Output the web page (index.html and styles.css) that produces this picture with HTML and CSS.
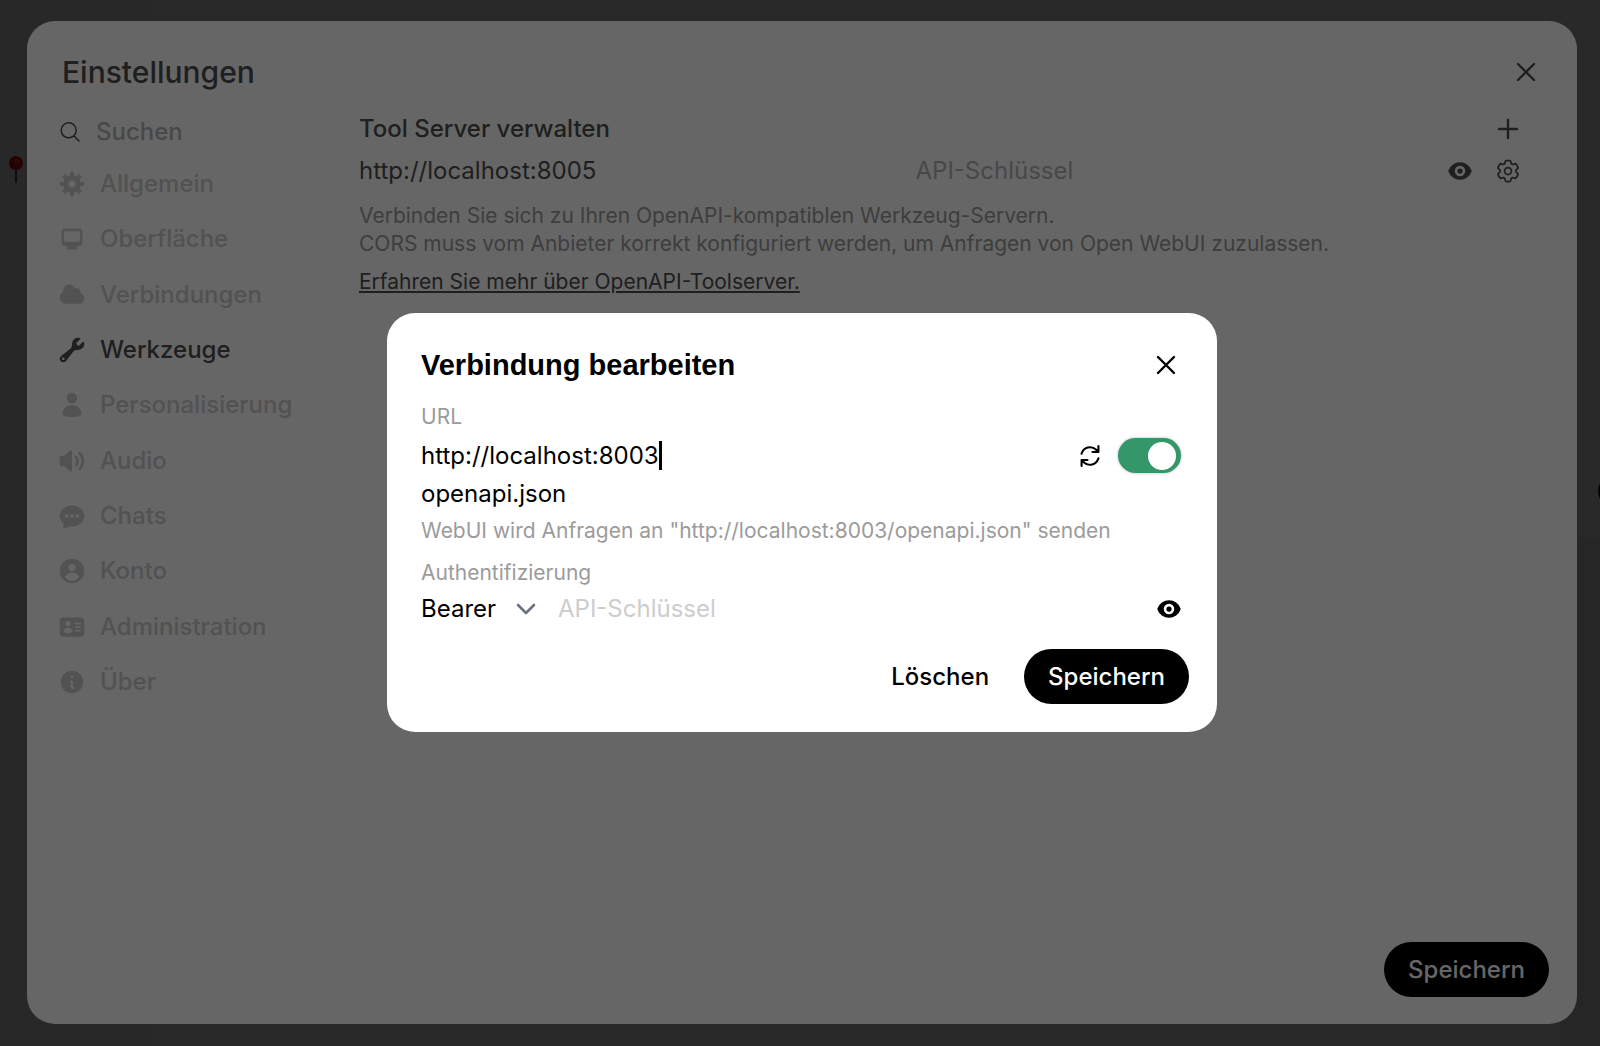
FILE: index.html
```html
<!DOCTYPE html>
<html lang="de">
<head>
  <meta charset="UTF-8">
  <meta name="viewport" content="width=device-width, initial-scale=1.0">
  <title>Einstellungen</title>
  <link rel="stylesheet" href="styles.css">
</head>
<body>
  <!-- Page behind the dialogs -->
  <div class="app">
    <div class="app-sidebar"></div>
    <div class="app-composer"></div>
    <div class="app-avatar"></div>
    <svg class="pin" viewBox="0 0 16 28" aria-hidden="true">
      <path d="M7 12h2v15H7z" fill="#555"/>
      <circle cx="8" cy="7" r="7" fill="#e01010"/>
      <ellipse cx="9" cy="5" rx="3" ry="2" fill="#f04a4a"/>
    </svg>
  </div>

  <!-- Settings -->
  <div class="overlay">
    <section class="settings" aria-label="Einstellungen">
      <header class="settings-header">
        <h1>Einstellungen</h1>
        <button type="button" class="icon-button" aria-label="Schließen">
          <svg class="icon stroke" viewBox="0 0 28 28"><path d="M6 6l16 16M22 6L6 22"/></svg>
        </button>
      </header>

      <div class="settings-body">
        <aside class="sidebar">
          <label class="search">
            <svg class="search-icon" viewBox="0 0 24 24"><path d="m21 21-5.2-5.2m0 0A7.5 7.5 0 1 0 5.2 5.2a7.5 7.5 0 0 0 10.6 10.6Z"/></svg>
            <input type="text" placeholder="Suchen" aria-label="Suchen">
          </label>

          <nav class="tabs">
            <button type="button" class="tab">
              <svg class="icon" viewBox="0 0 16 16"><path fill-rule="evenodd" d="M6.955 1.45A.5.5 0 0 1 7.452 1h1.096a.5.5 0 0 1 .497.45l.17 1.699c.484.12.94.312 1.356.562l1.321-1.081a.5.5 0 0 1 .67.033l.774.775a.5.5 0 0 1 .034.67l-1.08 1.32c.25.417.44.873.561 1.357l1.699.17a.5.5 0 0 1 .45.497v1.096a.5.5 0 0 1-.45.497l-1.699.17c-.12.484-.312.94-.562 1.356l1.082 1.322a.5.5 0 0 1-.034.67l-.774.774a.5.5 0 0 1-.67.033l-1.322-1.08c-.416.25-.872.44-1.356.561l-.17 1.699a.5.5 0 0 1-.497.45H7.452a.5.5 0 0 1-.497-.45l-.17-1.699a4.973 4.973 0 0 1-1.356-.562L4.108 13.37a.5.5 0 0 1-.67-.033l-.774-.775a.5.5 0 0 1-.034-.67l1.08-1.32a4.971 4.971 0 0 1-.561-1.357l-1.699-.17A.5.5 0 0 1 1 8.548V7.452a.5.5 0 0 1 .45-.497l1.699-.17c.12-.484.312-.94.562-1.356L2.629 4.107a.5.5 0 0 1 .034-.67l.774-.774a.5.5 0 0 1 .67-.033L5.43 3.71a4.97 4.97 0 0 1 1.356-.561l.17-1.699ZM6 8a2 2 0 1 0 4 0 2 2 0 0 0-4 0Z"/></svg>
              Allgemein
            </button>
            <button type="button" class="tab">
              <svg class="icon" viewBox="0 0 16 16"><path fill-rule="evenodd" d="M2 4.25A2.25 2.25 0 0 1 4.25 2h7.5A2.25 2.25 0 0 1 14 4.25v5.5A2.25 2.25 0 0 1 11.75 12h-1.312c.1.128.21.248.328.36a.75.75 0 0 1 .234.545v.345a.75.75 0 0 1-.75.75h-4.5a.75.75 0 0 1-.75-.75v-.345a.75.75 0 0 1 .234-.545c.118-.111.228-.232.328-.36H4.25A2.25 2.25 0 0 1 2 9.75v-5.5Zm2.25-.75a.75.75 0 0 0-.75.75v4.5c0 .414.336.75.75.75h7.5a.75.75 0 0 0 .75-.75v-4.5a.75.75 0 0 0-.75-.75h-7.5Z"/></svg>
              Oberfläche
            </button>
            <button type="button" class="tab">
              <svg class="icon" viewBox="0 0 16 16"><path d="M1 9.5A3.5 3.5 0 0 0 4.5 13H12a3 3 0 0 0 .917-5.857 2.503 2.503 0 0 0-3.198-3.019 3.5 3.5 0 0 0-6.628 2.171A3.5 3.5 0 0 0 1 9.5Z"/></svg>
              Verbindungen
            </button>
            <button type="button" class="tab active">
              <svg class="icon" viewBox="0 0 16 16"><path fill-rule="evenodd" d="M11.5 8a3.5 3.5 0 0 0 3.362-4.476c-.094-.325-.497-.39-.736-.15L12.099 5.4a.48.48 0 0 1-.653.033 8.554 8.554 0 0 1-.879-.879.48.48 0 0 1 .033-.653l2.027-2.028c.24-.239.175-.642-.15-.736a3.502 3.502 0 0 0-4.476 3.427c.018.99-.133 2.093-.914 2.7l-5.31 4.13a2.015 2.015 0 1 0 2.828 2.827l4.13-5.309c.607-.78 1.71-.932 2.7-.914L11.5 8ZM3 13.75a.75.75 0 1 0 0-1.5.75.75 0 0 0 0 1.5Z"/></svg>
              Werkzeuge
            </button>
            <button type="button" class="tab">
              <svg class="icon" viewBox="0 0 24 24"><path d="M7.5 6a4.5 4.5 0 1 1 9 0 4.5 4.5 0 0 1-9 0ZM3.751 20.105a8.25 8.25 0 0 1 16.498 0 .75.75 0 0 1-.437.695A18.683 18.683 0 0 1 12 22.5c-2.786 0-5.433-.608-7.812-1.7a.75.75 0 0 1-.437-.695Z"/></svg>
              Personalisierung
            </button>
            <button type="button" class="tab">
              <svg class="icon" viewBox="0 0 16 16"><path d="M7.557 2.066A.75.75 0 0 1 8 2.75v10.5a.75.75 0 0 1-1.248.56L3.59 11H2a1 1 0 0 1-1-1V6a1 1 0 0 1 1-1h1.59l3.162-2.81a.75.75 0 0 1 .805-.124ZM12.95 3.05a.75.75 0 1 0-1.06 1.06 5.5 5.5 0 0 1 0 7.78.75.75 0 1 0 1.06 1.06 7 7 0 0 0 0-9.9Z"/><path d="M10.828 5.172a.75.75 0 1 0-1.06 1.06 2.5 2.5 0 0 1 0 3.536.75.75 0 1 0 1.06 1.06 4 4 0 0 0 0-5.656Z"/></svg>
              Audio
            </button>
            <button type="button" class="tab">
              <svg class="icon" viewBox="0 0 16 16"><path fill-rule="evenodd" d="M8 2C4.262 2 1 4.57 1 8c0 1.86.98 3.486 2.455 4.566a3.472 3.472 0 0 1-.469 1.26.75.75 0 0 0 .713 1.14 6.961 6.961 0 0 0 3.06-1.06c.403.062.818.094 1.241.094 3.738 0 7-2.57 7-6s-3.262-6-7-6ZM5 9a1 1 0 1 0 0-2 1 1 0 0 0 0 2Zm7-1a1 1 0 1 1-2 0 1 1 0 0 1 2 0ZM8 9a1 1 0 1 0 0-2 1 1 0 0 0 0 2Z"/></svg>
              Chats
            </button>
            <button type="button" class="tab">
              <svg class="icon" viewBox="0 0 16 16"><path fill-rule="evenodd" d="M15 8A7 7 0 1 1 1 8a7 7 0 0 1 14 0Zm-5-2a2 2 0 1 1-4 0 2 2 0 0 1 4 0ZM8 9c-1.825 0-3.422.977-4.295 2.437A5.49 5.49 0 0 0 8 13.5a5.49 5.49 0 0 0 4.294-2.063A4.997 4.997 0 0 0 8 9Z"/></svg>
              Konto
            </button>
            <button type="button" class="tab">
              <svg class="icon" viewBox="0 0 24 24"><path fill-rule="evenodd" d="M4.5 3.75a3 3 0 0 0-3 3v10.5a3 3 0 0 0 3 3h15a3 3 0 0 0 3-3V6.75a3 3 0 0 0-3-3h-15Zm4.125 3a2.25 2.25 0 1 0 0 4.5 2.25 2.25 0 0 0 0-4.5Zm-3.873 8.703a4.126 4.126 0 0 1 7.746 0 .75.75 0 0 1-.351.92 7.47 7.47 0 0 1-3.522.877 7.47 7.47 0 0 1-3.522-.877.75.75 0 0 1-.351-.92ZM15 8.25a.75.75 0 0 0 0 1.5h3.75a.75.75 0 0 0 0-1.5H15ZM14.25 12a.75.75 0 0 1 .75-.75h3.75a.75.75 0 0 1 0 1.5H15a.75.75 0 0 1-.75-.75Zm.75 2.25a.75.75 0 0 0 0 1.5h3.75a.75.75 0 0 0 0-1.5H15Z"/></svg>
              Administration
            </button>
            <button type="button" class="tab">
              <svg class="icon" viewBox="0 0 20 20"><path fill-rule="evenodd" d="M18 10a8 8 0 1 1-16 0 8 8 0 0 1 16 0zm-7-4a1 1 0 1 1-2 0 1 1 0 0 1 2 0zM9 9a.75.75 0 0 0 0 1.5h.253a.25.25 0 0 1 .244.304l-.459 2.066A1.75 1.75 0 0 0 10.747 15H11a.75.75 0 0 0 0-1.5h-.253a.25.25 0 0 1-.244-.304l.459-2.066A1.75 1.75 0 0 0 9.253 9H9z"/></svg>
              Über
            </button>
          </nav>
        </aside>

        <form class="tools">
          <div class="row">
            <h2>Tool Server verwalten</h2>
            <button type="button" class="icon-button" aria-label="Verbindung hinzufügen">
              <svg class="icon stroke" viewBox="0 0 28 28"><path d="M14 5v18M5 14h18"/></svg>
            </button>
          </div>

          <div class="row server">
            <input type="text" class="server-url" value="http://localhost:8005" aria-label="URL">
            <input type="password" class="server-key" placeholder="API-Schlüssel" aria-label="API-Schlüssel">
            <button type="button" class="icon-button" aria-label="Schlüssel anzeigen">
              <svg class="icon" viewBox="0 0 16 16"><path d="M8 9.5a1.5 1.5 0 1 0 0-3 1.5 1.5 0 0 0 0 3Z"/><path fill-rule="evenodd" d="M1.38 8.28a.87.87 0 0 1 0-.566 7.003 7.003 0 0 1 13.238.006.87.87 0 0 1 0 .566A7.003 7.003 0 0 1 1.379 8.28ZM11 8a3 3 0 1 1-6 0 3 3 0 0 1 6 0Z"/></svg>
            </button>
            <button type="button" class="icon-button" aria-label="Konfigurieren">
              <svg class="icon outline" viewBox="0 0 24 24"><path d="M9.594 3.94c.09-.542.56-.94 1.11-.94h2.593c.55 0 1.02.398 1.11.94l.213 1.281c.063.374.313.686.645.87.074.04.147.083.22.127.325.196.72.257 1.075.124l1.217-.456a1.125 1.125 0 0 1 1.37.49l1.296 2.247a1.125 1.125 0 0 1-.26 1.431l-1.003.827c-.293.241-.438.613-.43.992a7.723 7.723 0 0 1 0 .255c-.008.378.137.75.43.991l1.004.827c.424.35.534.955.26 1.43l-1.298 2.247a1.125 1.125 0 0 1-1.369.491l-1.217-.456c-.355-.133-.75-.072-1.076.124a6.47 6.47 0 0 1-.22.128c-.331.183-.581.495-.644.869l-.213 1.281c-.09.543-.56.94-1.11.94h-2.594c-.55 0-1.019-.398-1.11-.94l-.213-1.281c-.062-.374-.312-.686-.644-.87a6.52 6.52 0 0 1-.22-.127c-.325-.196-.72-.257-1.076-.124l-1.217.456a1.125 1.125 0 0 1-1.369-.49l-1.297-2.247a1.125 1.125 0 0 1 .26-1.431l1.004-.827c.292-.24.437-.613.43-.991a6.932 6.932 0 0 1 0-.255c.007-.38-.138-.751-.43-.992l-1.004-.827a1.125 1.125 0 0 1-.26-1.43l1.297-2.247a1.125 1.125 0 0 1 1.37-.491l1.216.456c.356.133.751.072 1.076-.124.072-.044.146-.086.22-.128.332-.183.582-.495.644-.869l.214-1.28Z"/><circle cx="12" cy="12" r="3"/></svg>
            </button>
          </div>

          <p class="description">
            Verbinden Sie sich zu Ihren OpenAPI-kompatiblen Werkzeug-Servern.<br>
            CORS muss vom Anbieter korrekt konfiguriert werden, um Anfragen von Open WebUI zuzulassen.
          </p>
          <a class="more" href="#">Erfahren Sie mehr über OpenAPI-Toolserver.</a>

          <div class="settings-footer">
            <button type="submit" class="primary">Speichern</button>
          </div>
        </form>
      </div>
    </section>
  </div>

  <!-- Edit connection -->
  <div class="overlay centered">
    <form class="dialog" role="dialog" aria-labelledby="dialogTitle">
      <header class="dialog-header">
        <h2 id="dialogTitle">Verbindung bearbeiten</h2>
        <button type="button" class="icon-button" aria-label="Schließen">
          <svg class="icon stroke" viewBox="0 0 28 28"><path d="M6 6l16 16M22 6L6 22"/></svg>
        </button>
      </header>

      <div class="dialog-fields">
        <label class="caption" for="url">URL</label>
        <div class="url-row">
          <input type="text" id="url" value="http://localhost:8003">
          <span class="caret"></span>
          <button type="button" class="icon-button refresh" aria-label="Verbindung prüfen">
            <svg class="icon" viewBox="0 0 20 20"><path d="M15.312 11.424a5.5 5.5 0 0 1-9.201 2.466l-.312-.311h2.433a.75.75 0 0 0 0-1.5H3.989a.75.75 0 0 0-.75.75v4.242a.75.75 0 0 0 1.5 0v-2.43l.31.31a7 7 0 0 0 11.712-3.138.75.75 0 0 0-1.449-.39zm1.23-3.723a.75.75 0 0 0 .219-.53V2.929a.75.75 0 0 0-1.5 0V5.36l-.31-.31A7 7 0 0 0 3.239 8.188a.75.75 0 1 0 1.448.389A5.5 5.5 0 0 1 13.89 6.11l.311.31h-2.432a.75.75 0 0 0 0 1.5h4.243a.75.75 0 0 0 .53-.219z"/></svg>
          </button>
          <input type="checkbox" class="switch" aria-label="Aktiviert" checked>
        </div>
        <input type="text" class="path" value="openapi.json" aria-label="OpenAPI-Pfad">
        <p class="hint">WebUI wird Anfragen an "http://localhost:8003/openapi.json" senden</p>

        <label class="caption auth-caption" for="auth">Authentifizierung</label>
        <div class="auth-row">
          <div class="select">
            <select id="auth">
              <option>Bearer</option>
            </select>
            <svg class="chevron" viewBox="0 0 20 12"><path d="M2 2l8 8 8-8"/></svg>
          </div>
          <input type="password" class="auth-key" placeholder="API-Schlüssel" aria-label="API-Schlüssel">
          <button type="button" class="icon-button" aria-label="Schlüssel anzeigen">
            <svg class="icon" viewBox="0 0 16 16"><path d="M8 9.5a1.5 1.5 0 1 0 0-3 1.5 1.5 0 0 0 0 3Z"/><path fill-rule="evenodd" d="M1.38 8.28a.87.87 0 0 1 0-.566 7.003 7.003 0 0 1 13.238.006.87.87 0 0 1 0 .566A7.003 7.003 0 0 1 1.379 8.28ZM11 8a3 3 0 1 1-6 0 3 3 0 0 1 6 0Z"/></svg>
          </button>
        </div>
      </div>

      <div class="dialog-actions">
        <button type="button" class="plain">Löschen</button>
        <button type="submit" class="primary">Speichern</button>
      </div>
    </form>
  </div>
</body>
</html>
```
FILE: styles.css
```css
/* General Styles */
* {
  box-sizing: border-box;
}

body {
  margin: 0;
  font-family: Inter, sans-serif;
  font-size: 24px;
  line-height: 34px;
  color: #4e4e4e;
  background-color: #ffffff;
}

h1, h2, p {
  margin: 0;
}

button, input, select {
  font: inherit;
  color: inherit;
  background: none;
  border: none;
  margin: 0;
  padding: 0;
}

input {
  min-width: 0;
  height: 34px;
  outline: none;
}

button {
  cursor: pointer;
}

/* Icons */
.icon {
  display: block;
  flex: none;
  width: 28px;
  height: 28px;
  fill: currentColor;
}

.stroke, .outline {
  fill: none;
  stroke: currentColor;
  stroke-width: 2.4;
  stroke-linecap: round;
  stroke-linejoin: round;
}

.outline {
  stroke-width: 1.5;
}

.icon-button {
  flex: none;
}

/* Page behind the dialogs */
.app {
  position: fixed;
  inset: 0;
  overflow: hidden;
}

.app-sidebar {
  width: 150px;
  height: 100%;
  background-color: #f9f9f9;
}

.app-composer {
  position: absolute;
  top: 537px;
  right: 0;
  bottom: 0;
  width: 40px;
  background-color: #f0f0f0;
}

.app-avatar {
  position: absolute;
  top: 475px;
  right: -30px;
  width: 32px;
  height: 32px;
  border-radius: 50%;
  background-color: #000000;
}

.pin {
  position: absolute;
  top: 156px;
  left: 8px;
  width: 16px;
  height: 28px;
}

/* Overlays */
.overlay {
  position: fixed;
  inset: 0;
  display: flex;
  padding: 21px 23px 22px 27px;
  background-color: rgba(0, 0, 0, 0.6);
}

.centered {
  align-items: center;
  justify-content: center;
}

/* Settings */
.settings {
  flex: 1;
  display: flex;
  flex-direction: column;
  border-radius: 28px;
  background-color: #ffffff;
}

.settings-header {
  display: flex;
  justify-content: space-between;
  align-items: center;
  padding: 33px 37px 0 35px;
}

h1 {
  font-size: 30px;
  line-height: 36px;
  font-weight: 500;
}

.settings-body {
  flex: 1;
  display: flex;
  gap: 44px;
  padding: 22px 28px 27px 31px;
}

/* Sidebar */
.sidebar {
  width: 257px;
}

.search {
  display: flex;
  align-items: center;
  gap: 14px;
  padding-top: 3px;
}

.search input {
  width: 200px;
  font-weight: 500;
}

.search-icon {
  width: 24px;
  height: 24px;
  fill: none;
  stroke: currentColor;
  stroke-width: 1.5;
  stroke-linecap: round;
}

input::placeholder {
  color: #b4b4b4;
  opacity: 1;
}

.tabs {
  display: flex;
  flex-direction: column;
  justify-content: space-between;
  height: 532px;
  margin-top: 18px;
}

.tab {
  display: flex;
  align-items: center;
  gap: 14px;
  font-weight: 500;
  text-align: left;
  color: #cdcdcd;
}

.tab.active {
  color: #4e4e4e;
}

/* Tool servers */
.tools {
  flex: 1;
  display: flex;
  flex-direction: column;
  align-items: flex-start;
}

.row {
  display: flex;
  align-items: center;
  align-self: stretch;
  justify-content: space-between;
  padding-right: 27px;
}

.row h2 {
  font-size: 24px;
  font-weight: 500;
}

.server {
  gap: 20px;
  margin-top: 8px;
}

.server-url {
  flex: 1;
}

.server-key {
  flex: 1;
  margin-left: 26px;
}

.description {
  margin-top: 14px;
  font-size: 21px;
  line-height: 28px;
  color: #9b9b9b;
}

.more {
  margin-top: 10px;
  font-size: 21px;
  line-height: 28px;
  color: #4e4e4e;
}

.settings-footer {
  align-self: flex-end;
  margin-top: auto;
}

.primary {
  display: block;
  height: 55px;
  padding: 0 24px;
  border-radius: 28px;
  font-weight: 500;
  color: #ffffff;
  background-color: #000000;
}

/* Edit connection */
.dialog {
  width: 830px;
  border-radius: 28px;
  color: #000000;
  background-color: #ffffff;
}

.dialog-header {
  display: flex;
  justify-content: space-between;
  align-items: center;
  padding: 34px 37px 0 34px;
}

.dialog h2 {
  font-family: "Liberation Sans", Arial, sans-serif;
  font-size: 29px;
  line-height: 36px;
  font-weight: 600;
}

.dialog-fields {
  display: flex;
  flex-direction: column;
  padding: 20px 34px 0;
}

.caption, .hint {
  font-size: 21px;
  line-height: 28px;
  color: #9b9b9b;
}

.url-row {
  display: flex;
  align-items: center;
  margin-top: 7px;
  padding-right: 2px;
}

.url-row input[type="text"] {
  field-sizing: content;
}

.caret {
  width: 3px;
  height: 29px;
  background-color: #000000;
}

.refresh {
  margin-left: auto;
}

.switch {
  appearance: none;
  display: flex;
  justify-content: flex-end;
  align-items: center;
  width: 63px;
  height: 35px;
  margin-left: 14px;
  padding: 0 5px;
  border-radius: 18px;
  background-color: #34976a;
  box-shadow: 0 0 3px rgba(0, 0, 0, 0.3);
}

.switch::before {
  content: "";
  width: 28px;
  height: 28px;
  border-radius: 50%;
  background-color: #ffffff;
}

.path {
  margin-top: 4px;
}

.hint {
  margin-top: 6px;
}

.auth-caption {
  margin-top: 14px;
}

.auth-row {
  display: flex;
  align-items: center;
  margin-top: 5px;
}

.select {
  position: relative;
  width: 137px;
}

.select select {
  width: 120px;
  height: 34px;
  appearance: none;
}

.chevron {
  position: absolute;
  top: 11px;
  left: 95px;
  width: 20px;
  height: 12px;
  fill: none;
  stroke: #6b7280;
  stroke-width: 2.6;
  stroke-linecap: round;
  stroke-linejoin: round;
  pointer-events: none;
}

.auth-key {
  flex: 1;
}

.auth-key::placeholder {
  color: #cdcdcd;
}

.dialog-actions {
  display: flex;
  justify-content: flex-end;
  gap: 11px;
  padding: 23px 28px 28px;
}

.plain {
  padding: 0 24px;
  font-weight: 500;
}
```
